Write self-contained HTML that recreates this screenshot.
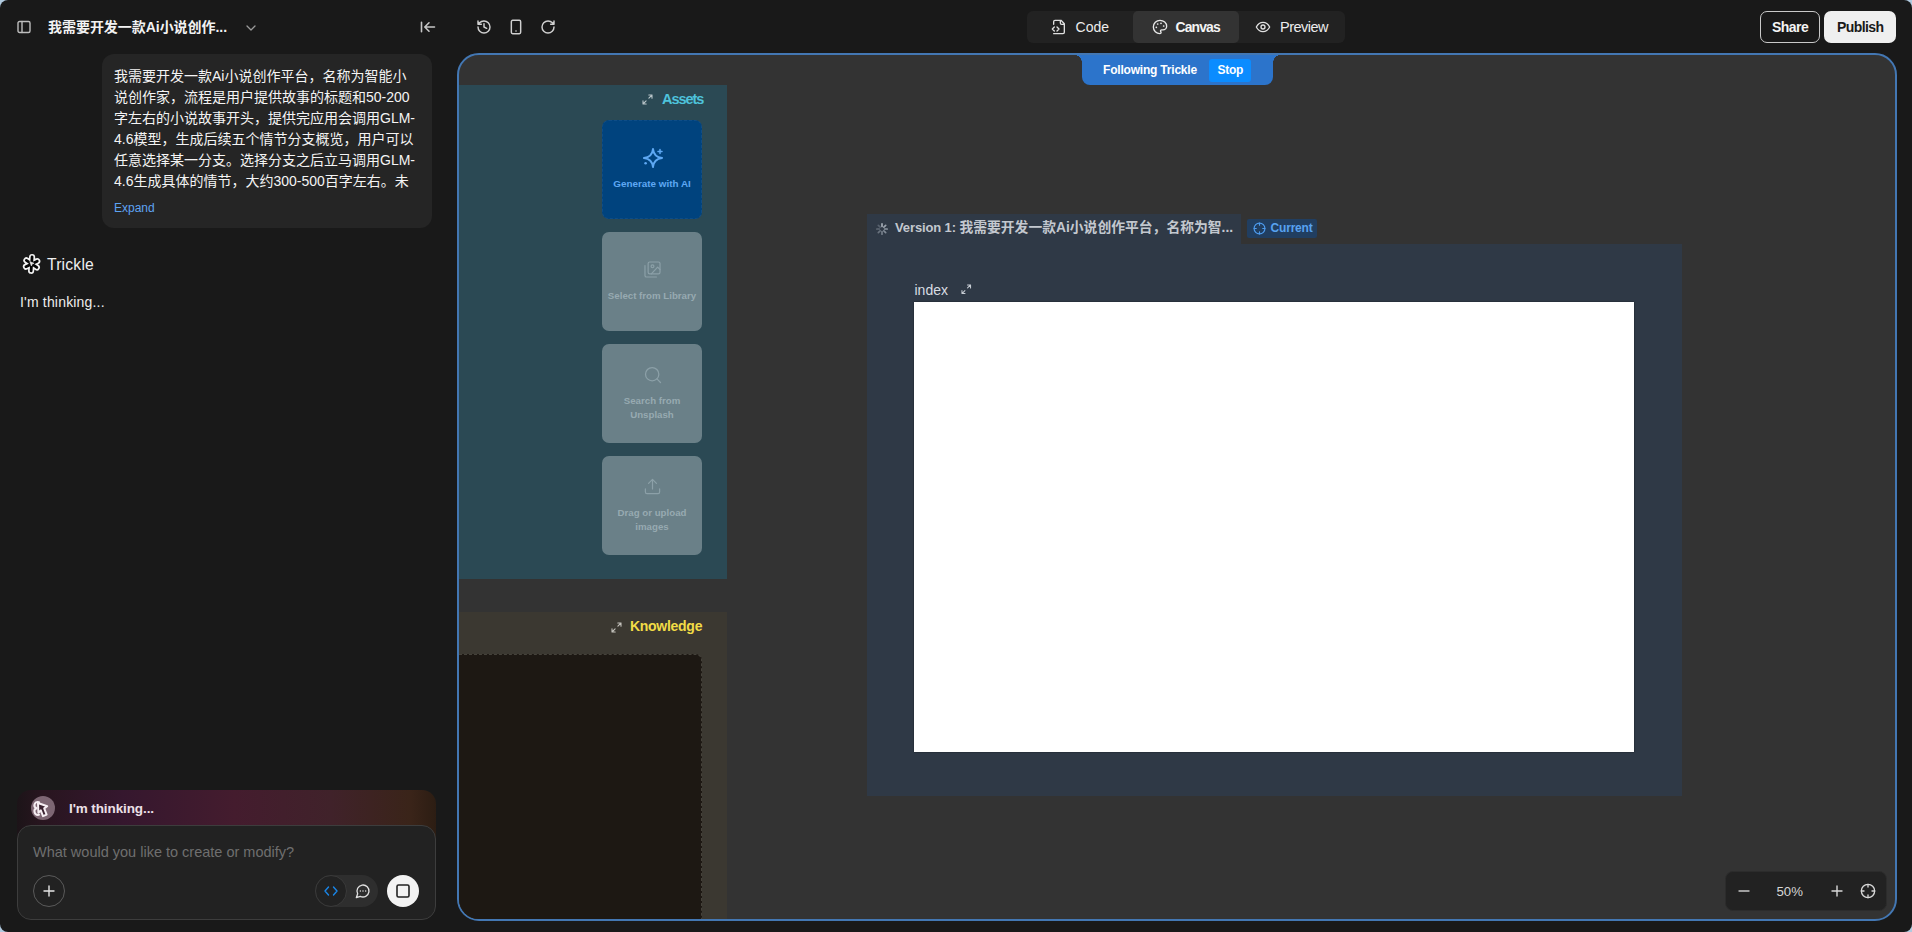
<!DOCTYPE html>
<html lang="zh">
<head>
<meta charset="utf-8">
<title>Trickle</title>
<style>
*{box-sizing:border-box;margin:0;padding:0}
html{width:1912px;height:932px;overflow:hidden;background:#b1cadf}
body{width:1912px;height:932px;overflow:hidden;background:#191919;border-radius:8px}
body{font-family:"Liberation Sans","Noto Sans CJK SC",sans-serif;color:#fff;position:relative;-webkit-font-smoothing:antialiased}
.abs{position:absolute}
svg{display:block;position:absolute;overflow:visible}
.ic{fill:none;stroke:#d0d0d0;stroke-width:1.6;stroke-linecap:round;stroke-linejoin:round}
.t{position:absolute;white-space:nowrap;line-height:1}
/* top bar */
#title{left:48px;top:20px;font-size:14px;font-weight:700;color:#f2f2f2;letter-spacing:-0.04px}
/* bubble */
#bubble{left:102px;top:54px;width:330px;height:174px;background:#252525;border-radius:12px}
#msg{position:absolute;left:114px;top:66px;width:310px;font-size:14px;line-height:21px;color:#f4f4f4;white-space:nowrap}
#expand{left:114px;top:202px;font-size:12px;color:#5ea3f2}
#trk{left:47px;top:256.800px;font-size:15.700px;letter-spacing:.2px;color:#f0f0f0}
#think1{left:20px;top:294.800px;font-size:14px;letter-spacing:.18px;color:#ededed}
/* bottom input */
#thinkbar{left:17px;top:790px;width:419px;height:50px;border-radius:14px 14px 0 0;background:linear-gradient(90deg,#1c1418 0%,#28151f 6%,#35172e 25%,#441c2e 52%,#40222a 75%,#3a2419 94%,#2c1d13 100%)}
#think2{left:69px;top:802px;font-size:13.5px;font-weight:700;color:#ece0e8;letter-spacing:-.1px}
#inputbox{left:16.500px;top:825px;width:419.500px;height:95px;border-radius:14px;background:#222222;border:1px solid #3d3d3d}
#ph{left:33px;top:845px;font-size:14.5px;color:#6f6f6f}
#plus{left:33px;top:875px;width:32px;height:32px;border-radius:50%;border:1px solid #5a5a5a}
#toggle{left:315px;top:875px;width:63px;height:32px;border-radius:16px;background:#2e2e2e}
#togglel{left:315px;top:875px;width:32px;height:32px;border-radius:50%;background:#222;border:1px solid #3a3a3a}
#stopc{left:387px;top:875px;width:32px;height:32px;border-radius:50%;background:#f3f3f3}
/* tabs */
#tabs{left:1027px;top:11px;width:318px;height:32px;border-radius:6px;background:#222222}
#tabact{left:1133px;top:11px;width:106px;height:32px;border-radius:5px;background:#333333}
.tab{font-size:14.5px;color:#ececec;top:20px}
#share{left:1760px;top:11px;width:60px;height:32px;border-radius:7px;border:1px solid #c9c9c9}
#publish{left:1824px;top:11px;width:72px;height:32px;border-radius:7px;background:#efefef}
.btnt{font-size:14px;font-weight:700;top:20px}
/* canvas */
#canvas{left:457px;top:53px;width:1440px;height:868px;border-radius:22px;border:2px solid #4377b3;background:#333333;overflow:hidden}
#canvas .abs, #canvas .t, #canvas svg{position:absolute}
#assets{left:0;top:29.500px;width:267.500px;height:494.500px;background:#2b4954}
.tile{left:143px;width:100px;height:99px;border-radius:7px;background:#6a8088}
.tlab{font-size:9.700px;font-weight:700;color:#97aab1;text-align:center;width:100px;left:143px;line-height:14px;white-space:normal}
#know{left:0;top:557px;width:267.500px;height:320px;background:#3b3831}
#knowin{left:0;top:599px;width:243px;height:280px;background:#1d1813;border-top:1px dashed #45423b;border-right:1px dashed #45423b;border-radius:0 6px 0 0}
#ver{left:408px;top:188.700px;width:814.700px;height:552.500px;background:#2f3946}
#vertab{left:408px;top:159px;width:374px;height:30px;background:#2f3946}
#page{left:455px;top:247.200px;width:720.300px;height:450.300px;box-shadow:0 0 1.500px rgba(0,0,0,.6);background:#ffffff}
#cur{left:788px;top:163.800px;width:69.500px;height:19.500px;background:#213e60;border-radius:2px}
#zoom{left:1266px;top:815.500px;width:162px;height:40.500px;border-radius:8px;background:#222222;border:1px solid #2c2c2c}
#follow{left:623px;top:0px;width:191px;height:30px;border-radius:0 0 8px 8px;background:#2c74cb}
#stopb{left:750px;top:3.500px;width:42px;height:23px;border-radius:3px;background:#0b8cff}
</style>
</head>
<body>
<!-- TOPBAR-LEFT -->
<svg style="left:17px;top:20px" width="14" height="14" viewBox="0 0 14 14"><rect class="ic" x="1" y="1.5" width="12" height="11" rx="1.5" style="stroke:#bdbdbd;stroke-width:1.4"/><path class="ic" d="M5 1.5v11" style="stroke:#bdbdbd;stroke-width:1.4"/></svg>
<div class="t" id="title">我需要开发一款Ai小说创作...</div>
<svg style="left:245px;top:24px" width="12" height="8" viewBox="0 0 12 8"><path class="ic" d="M2 2l4 4 4-4" style="stroke:#9a9a9a;stroke-width:1.3"/></svg>
<svg style="left:420px;top:20px" width="16" height="14" viewBox="0 0 16 14"><path class="ic" d="M1.500 2.200v9.600M14.500 7H5M9 2.800L4.800 7 9 11.200" style="stroke:#c6c6c6"/></svg>
<svg style="left:476px;top:19px" width="16" height="16" viewBox="0 0 24 24"><path class="ic" d="M3 12a9 9 0 1 0 9-9 9.75 9.75 0 0 0-6.74 2.74L3 8M3 3v5h5M12 7v5l4 2" style="stroke-width:2.2"/></svg>
<svg style="left:508px;top:19px" width="16" height="16" viewBox="0 0 24 24"><rect class="ic" x="5" y="2" width="14" height="20" rx="2" style="stroke-width:2.2"/><path class="ic" d="M12 18h.01" style="stroke-width:2.4"/></svg>
<svg style="left:540px;top:19px" width="16" height="16" viewBox="0 0 24 24"><path class="ic" d="M21 12a9 9 0 1 1-9-9c2.52 0 4.93 1 6.74 2.74L21 8M21 3v5h-5" style="stroke-width:2.2"/></svg>

<!-- CHAT -->
<div class="abs" id="bubble"></div>
<div id="msg">我需要开发一款Ai小说创作平台，名称为智能小<br>说创作家，流程是用户提供故事的标题和50-200<br>字左右的小说故事开头，提供完应用会调用GLM-<br>4.6模型，生成后续五个情节分支概览，用户可以<br>任意选择某一分支。选择分支之后立马调用GLM-<br>4.6生成具体的情节，大约300-500百字左右。未</div>
<div class="t" id="expand">Expand</div>
<svg style="left:21px;top:253px" width="20" height="21" viewBox="0 0 20 21"><path d="M10.6 10.9L11.08 4.02M10.6 10.9L5.38 7.38M10.6 10.9L4.94 13.66M10.6 10.9L10.12 17.78M10.6 10.9L15.82 14.42M10.6 10.9L16.26 8.14" style="fill:none;stroke:#f2f2f2;stroke-width:6.200;stroke-linecap:round"/><path d="M10.6 10.9L11.08 4.02M10.6 10.9L5.38 7.38M10.6 10.9L4.94 13.66M10.6 10.9L10.12 17.78M10.6 10.9L15.82 14.42M10.6 10.9L16.26 8.14" style="fill:none;stroke:#050505;stroke-width:2.800;stroke-linecap:round"/><path d="M8.800 8.600l4.300 1.700-2 .700-.700 2z" style="fill:#e8e8e8;stroke:#e8e8e8;stroke-width:.600;stroke-linejoin:round"/></svg>
<div class="t" id="trk">Trickle</div>
<div class="t" id="think1">I'm thinking...</div>

<!-- INPUT -->
<div class="abs" id="thinkbar"></div>
<div class="abs" style="left:31px;top:796px;width:24px;height:24px;border-radius:50%;background:#7d6673"></div>
<svg style="left:31px;top:796px" width="24" height="24" viewBox="0 0 24 24"><path d="M8 6.200C3.500 4.800 1.600 10.600 5.600 12.200C2 13.400 3 19.800 8 18.800" style="fill:none;stroke:#f6eef3;stroke-width:2;stroke-linecap:round;stroke-linejoin:round"/><path d="M7 7L16.200 10.200L13.200 12.400L15.600 18.600L12 20.200L9.800 14.400L7.400 16.800z" style="fill:#3a2230;stroke:#f6eef3;stroke-width:2;stroke-linejoin:round"/></svg>
<div class="t" id="think2">I'm thinking...</div>
<div class="abs" id="inputbox"></div>
<div class="t" id="ph">What would you like to create or modify?</div>
<div class="abs" id="plus"></div>
<svg style="left:43px;top:885px" width="12" height="12" viewBox="0 0 12 12"><path class="ic" d="M6 1v10M1 6h10" style="stroke:#e6e6e6;stroke-width:1.4"/></svg>
<div class="abs" id="toggle"></div>
<div class="abs" id="togglel"></div>
<svg style="left:324px;top:886px" width="14" height="10" viewBox="0 0 14 10"><path class="ic" d="M4.500 1L1 5l3.500 4M9.500 1L13 5l-3.500 4" style="stroke:#1a86e8;stroke-width:1.4"/></svg>
<svg style="left:355px;top:883px" width="16" height="16" viewBox="0 0 24 24"><path class="ic" d="M7.900 20A9 9 0 1 0 4 16.100L2 22z" style="stroke:#e0e0e0;stroke-width:2"/><path class="ic" d="M8 12h.01M12 12h.01M16 12h.01" style="stroke:#e0e0e0;stroke-width:2.200"/></svg>
<div class="abs" id="stopc"></div>
<svg style="left:396px;top:884px" width="14" height="14" viewBox="0 0 14 14"><rect class="ic" x="1" y="1" width="12" height="12" rx="1.500" style="stroke:#222;stroke-width:1.600"/></svg>

<!-- TABS -->
<div class="abs" id="tabs"></div>
<div class="abs" id="tabact"></div>
<svg style="left:1051px;top:19px" width="16" height="16" viewBox="0 0 24 24"><path class="ic" d="M4 22h14a2 2 0 0 0 2-2V7l-5-5H6a2 2 0 0 0-2 2v4M14 2v4a2 2 0 0 0 2 2h4M5 12l-3 3 3 3M9 18l3-3-3-3" style="stroke-width:2;stroke:#e0e0e0"/></svg>
<div class="t tab" style="left:1075.500px;font-size:14px;top:20px;letter-spacing:.05px">Code</div>
<svg style="left:1152px;top:19px" width="16" height="16" viewBox="0 0 24 24"><path class="ic" d="M12 2C6.500 2 2 6.500 2 12s4.500 10 10 10c.930 0 1.650-.750 1.650-1.690 0-.440-.180-.830-.440-1.120-.290-.290-.440-.650-.440-1.130a1.640 1.640 0 0 1 1.670-1.670h2c3.050 0 5.550-2.500 5.550-5.550C22 6 17.500 2 12 2z" style="stroke-width:2;stroke:#e8e8e8"/><path class="ic" d="M13.500 6.500h.01M17.500 10.500h.01M8.500 7.500h.01M6.500 12.500h.01" style="stroke-width:2.600;stroke:#e8e8e8"/></svg>
<div class="t tab" style="left:1175.500px;font-weight:700;color:#f4f4f4;font-size:13.900px;letter-spacing:-.86px;top:20.500px">Canvas</div>
<svg style="left:1255px;top:19px" width="16" height="16" viewBox="0 0 24 24"><path class="ic" d="M2 12s3.600-7 10-7 10 7 10 7-3.600 7-10 7-10-7-10-7z" style="stroke-width:2;stroke:#e0e0e0"/><circle class="ic" cx="12" cy="12" r="3" style="stroke-width:2;stroke:#e0e0e0"/></svg>
<div class="t tab" style="left:1280px;letter-spacing:-.5px">Preview</div>
<div class="abs" id="share"></div>
<div class="t btnt" style="left:1772px;color:#f4f4f4;letter-spacing:-.55px">Share</div>
<div class="abs" id="publish"></div>
<div class="t btnt" style="left:1837px;color:#1a1a1a;letter-spacing:-.6px">Publish</div>

<!-- CANVAS -->
<div class="abs" id="canvas">
  <div class="abs" id="assets"></div>
  <div class="abs" id="know"></div>
  <div class="abs" id="knowin"></div>
  <div class="abs" id="vertab"></div>
  <div class="abs" id="ver"></div>
  <div class="abs" id="page"></div>
  <div class="abs" id="cur"></div>
  <div class="abs" id="zoom"></div>
  <div class="abs" id="follow"></div>
  <div class="abs" style="left:616px;top:0;width:7px;height:8px;background:radial-gradient(ellipse 7px 8px at 0 100%,rgba(44,116,203,0) 96%,#2c74cb 100%)"></div>
  <div class="abs" style="left:814px;top:0;width:7px;height:8px;background:radial-gradient(ellipse 7px 8px at 100% 100%,rgba(44,116,203,0) 96%,#2c74cb 100%)"></div>
  <div class="abs" id="stopb"></div>
  <div class="t" style="left:644px;top:9px;font-size:12px;font-weight:700;color:#fff;letter-spacing:-.2px">Following Trickle</div>
  <div class="t" style="left:758.500px;top:9px;font-size:12px;font-weight:700;color:#fff;letter-spacing:-.25px">Stop</div>
  <!-- ASSETS -->
  <svg style="left:183px;top:39px" width="11" height="11" viewBox="0 0 11 11"><path class="ic" d="M6.800 1H10v3.200M10 1L6.900 4.100M4.200 10H1V6.800M1 10l3.100-3.100" style="stroke:#b8c4c8;stroke-width:1.100"/></svg>
  <div class="t" style="left:203px;top:37px;font-size:14.500px;font-weight:700;color:#4ec3dc;letter-spacing:-1.050px">Assets</div>
  <div class="abs tile" style="top:65px;background:#00437e;border:1px dashed #0e4d88"></div>
  <svg style="left:182.600px;top:92.400px" width="22" height="22" viewBox="0 0 22 22"><path d="M11 1.900Q11.800 10.200 20.100 11Q11.800 11.800 11 20.100Q10.200 11.800 1.900 11Q10.200 10.200 11 1.900z" style="fill:none;stroke:#5ea8f3;stroke-width:1.900;stroke-linejoin:round"/><path d="M18 2.600v4M16 4.600h4" style="fill:none;stroke:#5ea8f3;stroke-width:1.500;stroke-linecap:round"/><circle cx="3.600" cy="16.200" r="1.300" style="fill:#5ea8f3"/></svg>
  <div class="t tlab" style="top:121.500px;color:#5ea8f3;font-size:9.900px">Generate with AI</div>
  <div class="abs tile" style="top:177px"></div>
  <svg style="left:184px;top:205px" width="19" height="19" viewBox="0 0 24 24"><rect class="ic" x="6.500" y="2.500" width="15" height="15" rx="2" style="stroke:#8ca0a8;stroke-width:1.500"/><path class="ic" d="M2.500 7v12.500a2 2 0 0 0 2 2H17M21.500 12l-3-3-8 8.500" style="stroke:#8ca0a8;stroke-width:1.500"/><circle class="ic" cx="12" cy="8" r="1.800" style="stroke:#8ca0a8;stroke-width:1.500"/></svg>
  <div class="t tlab" style="top:233.500px">Select from Library</div>
  <div class="abs tile" style="top:289px"></div>
  <svg style="left:184px;top:310px" width="20" height="20" viewBox="0 0 24 24"><circle class="ic" cx="11" cy="11" r="8" style="stroke:#8ca0a8;stroke-width:1.500"/><path class="ic" d="M21 21l-4.300-4.300" style="stroke:#8ca0a8;stroke-width:1.500"/></svg>
  <div class="t tlab" style="top:338.500px">Search from Unsplash</div>
  <div class="abs tile" style="top:401px"></div>
  <svg style="left:184px;top:422px" width="19" height="19" viewBox="0 0 24 24"><path class="ic" d="M3 15v4a2 2 0 0 0 2 2h14a2 2 0 0 0 2-2v-4M17 8l-5-5-5 5M12 3v12" style="stroke:#8ca0a8;stroke-width:1.500"/></svg>
  <div class="t tlab" style="top:450.500px">Drag or upload images</div>
  <!-- KNOWLEDGE -->
  <svg style="left:152px;top:567px" width="11" height="11" viewBox="0 0 11 11"><path class="ic" d="M6.800 1H10v3.200M10 1L6.900 4.100M4.200 10H1V6.800M1 10l3.100-3.100" style="stroke:#c4c2bc;stroke-width:1.100"/></svg>
  <div class="t" style="left:171px;top:564.200px;font-size:14px;font-weight:700;color:#f2dc46;letter-spacing:-.28px">Knowledge</div>
  <!-- VERSION -->
  <svg style="left:416.500px;top:167.600px" width="12" height="12" viewBox="0 0 12 12"><g style="fill:none;stroke:#a4acb6;stroke-width:1.700;stroke-linecap:round"><path d="M6.00 3.40L6.00 0.80" style="opacity:1"/><path d="M7.84 4.16L9.68 2.32" style="opacity:0.9"/><path d="M8.60 6.00L11.20 6.00" style="opacity:0.8"/><path d="M7.84 7.84L9.68 9.68" style="opacity:0.7"/><path d="M6.00 8.60L6.00 11.20" style="opacity:0.6"/><path d="M4.16 7.84L2.32 9.68" style="opacity:0.5"/><path d="M3.40 6.00L0.80 6.00" style="opacity:0.42"/><path d="M4.16 4.16L2.32 2.32" style="opacity:0.35"/></g></svg>
  <div class="t" style="left:436px;top:166px;font-size:13.800px;font-weight:700;color:#c3c8cf"><span style="font-size:13px;letter-spacing:-.12px">Version 1: </span>我需要开发一款Ai小说创作平台，名称为智...</div>
  <svg style="left:794px;top:167px" width="13" height="13" viewBox="0 0 24 24"><circle class="ic" cx="12" cy="12" r="10" style="stroke:#4d9bee;stroke-width:2.200"/><path class="ic" d="M22 12h-4M6 12H2M12 6V2M12 22v-4" style="stroke:#4d9bee;stroke-width:2.200"/></svg>
  <div class="t" style="left:811.500px;top:167px;font-size:12px;font-weight:700;color:#58a2f0;letter-spacing:-.18px">Current</div>
  <div class="t" style="left:455.500px;top:227.500px;font-size:14px;color:#d9dde2">index</div>
  <svg style="left:502px;top:229px" width="10.500" height="10.500" viewBox="0 0 11 11"><path class="ic" d="M6.800 1H10v3.200M10 1L6.900 4.100M4.200 10H1V6.800M1 10l3.100-3.100" style="stroke:#c6ccd3;stroke-width:1.100"/></svg>
  <!-- ZOOM -->
  <svg style="left:1279px;top:830px" width="12" height="12" viewBox="0 0 12 12"><path class="ic" d="M1 6h10" style="stroke:#c8c8c8;stroke-width:1.400"/></svg>
  <div class="t" style="left:1317.500px;top:830px;font-size:13.200px;color:#d6d6d6">50%</div>
  <svg style="left:1371.500px;top:830px" width="12" height="12" viewBox="0 0 12 12"><path class="ic" d="M1 6h10M6 1v10" style="stroke:#d8d8d8;stroke-width:1.400"/></svg>
  <svg style="left:1401px;top:828px" width="16" height="16" viewBox="0 0 24 24"><circle class="ic" cx="12" cy="12" r="10" style="stroke:#d8d8d8;stroke-width:2"/><path class="ic" d="M22 12h-4M6 12H2M12 6V2M12 22v-4" style="stroke:#d8d8d8;stroke-width:2"/></svg>
</div>
</body>
</html>
